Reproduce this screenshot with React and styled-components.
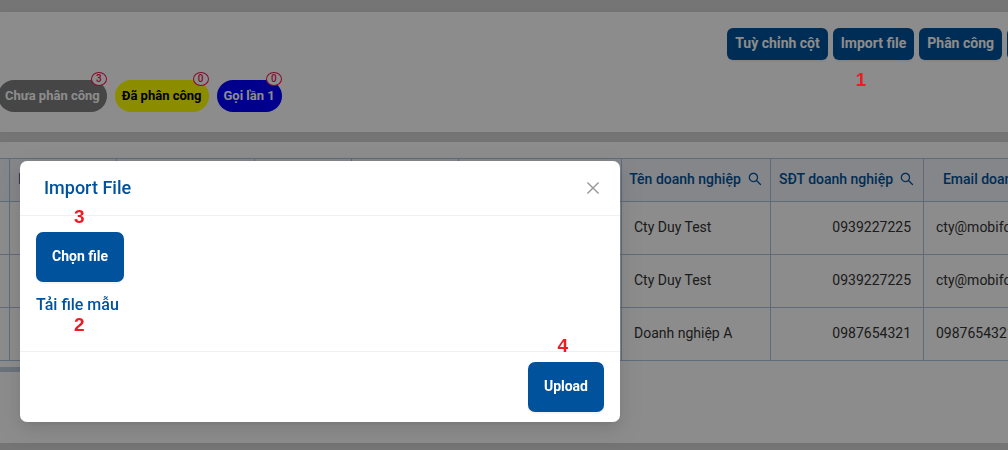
import React from 'react';
import styled, {createGlobalStyle} from 'styled-components';
import {AiOutlineClose, AiOutlineSearch} from 'react-icons/ai';

const GlobalStyle = createGlobalStyle`
  :root {
    --mainBlue: #00529c;
    --lineBlue: #a9c3e0;
    --markRed: #ed1c24;
  }
  *, *::before, *::after {
    box-sizing: border-box;
  }
  body {
    margin: 0;
    background: #d6d6d6;
    color: #333;
    font-family: Roboto, "Noto Sans", sans-serif;
    font-size: 14px;
    line-height: 22px;
  }
`;

const tags = [
  {label: 'Chưa phân công', count: 3, bg: '#808080', color: '#fff'},
  {label: 'Đã phân công', count: 0, bg: '#ffff00', color: '#000'},
  {label: 'Gọi lần 1', count: 0, bg: '#0000ff', color: '#fff'},
];

// width in px of every column, the table is wider than its card
const columns = [10, 107, 138, 97, 107, 163, 149, 153, 184];

const rows = [
  {name: 'Cty Duy Test', phone: '0939227225', email: 'cty@mobifone.vn'},
  {name: 'Cty Duy Test', phone: '0939227225', email: 'cty@mobifone.vn'},
  {name: 'Doanh nghiệp A', phone: '0987654321', email: '0987654321@gmail.com'},
];

function SearchHead({title}) {
  return (
    <HeadCell>
      <HeadInner>
        {title}
        <AiOutlineSearch size={16}/>
      </HeadInner>
    </HeadCell>
  );
}

function ActionCard() {
  return (
    <Card as="header">
      <Toolbar>
        <ToolButton type="button">Tuỳ chỉnh cột</ToolButton>
        <ToolButton type="button">Import file</ToolButton>
        <ToolButton type="button">Phân công</ToolButton>
        <ToolButton type="button" $wide aria-label="Export file"/>
      </Toolbar>
      <TagList>
        {tags.map(tag => (
          <Tag type="button" key={tag.label} $bg={tag.bg} $color={tag.color}>
            {tag.label}
            <Count>{tag.count}</Count>
          </Tag>
        ))}
      </TagList>
    </Card>
  );
}

function CompanyTable() {
  return (
    <TableCard>
      <TableScroll>
        <Table>
          <colgroup>
            {columns.map((width, i) => <col key={i} style={{width}}/>)}
          </colgroup>
          <thead>
            <tr>
              <HeadCell/>
              <HeadCell $left>ID</HeadCell>
              <HeadCell/>
              <HeadCell/>
              <HeadCell/>
              <HeadCell/>
              <SearchHead title="Tên doanh nghiệp"/>
              <SearchHead title="SĐT doanh nghiệp"/>
              <SearchHead title="Email doanh nghiệp"/>
            </tr>
          </thead>
          <tbody>
            {rows.map((row, i) => (
              <tr key={i}>
                <Cell/>
                <Cell/>
                <Cell/>
                <Cell/>
                <Cell/>
                <Cell/>
                <Cell>{row.name}</Cell>
                <Cell $right>{row.phone}</Cell>
                <Cell>{row.email}</Cell>
              </tr>
            ))}
          </tbody>
        </Table>
      </TableScroll>
      <ScrollThumb/>
    </TableCard>
  );
}

function ImportModal() {
  return (
    <Modal role="dialog" aria-labelledby="import-title">
      <ModalHeader>
        <ModalTitle id="import-title">Import File</ModalTitle>
        <CloseButton type="button" aria-label="Close">
          <AiOutlineClose size={18}/>
        </CloseButton>
      </ModalHeader>
      <ModalBody>
        <MainButton type="button">Chọn file</MainButton>
        <SampleLink href="#sample">Tải file mẫu</SampleLink>
        <Mark $top={-10} $left={54}>3</Mark>
        <Mark $top={98} $left={54}>2</Mark>
      </ModalBody>
      <ModalFooter>
        <MainButton type="button">Upload</MainButton>
        <Mark $top={-17} $right={52}>4</Mark>
      </ModalFooter>
    </Modal>
  );
}

export default function App() {
  return (
    <Page>
      <GlobalStyle/>
      <ActionCard/>
      <CompanyTable/>
      <Mask>
        <ImportModal/>
        <Mark $top={69} $right={142}>1</Mark>
      </Mask>
    </Page>
  );
}

const Page = styled.main`
  display: flex;
  flex-direction: column;
  gap: 10px;
  min-height: 100vh;
  padding: 12px 0 7px;
  overflow: hidden;
`;

const Card = styled.section`
  padding: 16px 0 20px;
  background: #fff;
  box-shadow: 0 0 8px rgba(0, 0, 0, 0.04);
`;

// the last button runs past the right edge of the window
const Toolbar = styled.div`
  display: flex;
  justify-content: flex-end;
  gap: 5px;
  margin-right: -80px;
`;

const ToolButton = styled.button`
  flex: none;
  width: ${props => props.$wide ? '81px' : 'auto'};
  height: 32px;
  padding: 0 8px 2px;
  border: 0;
  border-radius: 6px;
  background: var(--mainBlue);
  box-shadow: 0 2px 0 rgba(0, 0, 0, 0.04);
  color: #fff;
  font: 700 14px/22px Roboto, "Noto Sans", sans-serif;
`;

const TagList = styled.div`
  display: flex;
  gap: 8px;
  margin: 20px 0 0 -2px;
`;

const Tag = styled.button`
  position: relative;
  height: 32px;
  padding: 0 7px;
  border: 0;
  border-radius: 16px;
  background: ${props => props.$bg};
  color: ${props => props.$color};
  font: 700 13px/20px Roboto, "Noto Sans", sans-serif;
`;

const Count = styled.span`
  position: absolute;
  top: -8px;
  right: 0;
  width: 16px;
  height: 14px;
  border: 1px solid #f5104f;
  border-radius: 50%;
  background: #fff;
  color: #f5104f;
  font-size: 10px;
  font-weight: 500;
  line-height: 12px;
`;

const TableCard = styled(Card)`
  flex: 1;
  padding: 16px 0;
`;

const TableScroll = styled.div`
  overflow: hidden;
`;

const Table = styled.table`
  width: 1108px;
  min-width: 100%;
  table-layout: fixed;
  border-spacing: 0;
  border-top: 1px solid var(--lineBlue);
`;

const HeadCell = styled.th`
  height: 43px;
  padding: 0 8px 2px;
  border-right: 1px solid var(--lineBlue);
  border-bottom: 1px solid var(--lineBlue);
  background: #f0f4fa;
  color: var(--mainBlue);
  font-weight: 500;
  text-align: ${props => props.$left ? 'left' : 'center'};
  white-space: nowrap;
`;

const HeadInner = styled.span`
  display: flex;
  align-items: center;
  justify-content: center;
  gap: 6px;

  svg {
    flex: none;
  }
`;

const Cell = styled.td`
  height: 53px;
  padding: 0 12px 2px;
  border-right: 1px solid var(--lineBlue);
  border-bottom: 1px solid var(--lineBlue);
  text-align: ${props => props.$right ? 'right' : 'left'};
  white-space: nowrap;
`;

const ScrollThumb = styled.div`
  width: 40%;
  height: 5px;
  margin-top: 6px;
  background: #c1cfdf;
`;

const Mask = styled.div`
  position: fixed;
  inset: 0;
  display: flex;
  align-items: flex-start;
  padding: 161px 20px 0;
  background: rgba(0, 0, 0, 0.45);
`;

const Modal = styled.div`
  width: 100%;
  max-width: 600px;
  border-radius: 7px;
  background: #fff;
  box-shadow: 0 3px 6px -4px rgba(0, 0, 0, 0.12),
    0 6px 16px rgba(0, 0, 0, 0.08),
    0 9px 28px 8px rgba(0, 0, 0, 0.05);
`;

const ModalHeader = styled.div`
  display: flex;
  align-items: center;
  justify-content: space-between;
  height: 55px;
  padding: 0 16px 0 24px;
  border-bottom: 1px solid #f0f0f0;
`;

const ModalTitle = styled.h2`
  margin: 0;
  color: var(--mainBlue);
  font-size: 18px;
  font-weight: 500;
  line-height: 22px;
`;

const CloseButton = styled.button`
  display: flex;
  padding: 2px;
  border: 0;
  background: none;
  color: #999;
`;

const ModalBody = styled.div`
  position: relative;
  display: flex;
  flex-direction: column;
  align-items: flex-start;
  gap: 11px;
  height: 135px;
  padding: 16px;
`;

const ModalFooter = styled.div`
  position: relative;
  display: flex;
  justify-content: flex-end;
  padding: 10px 16px;
  border-top: 1px solid #f0f0f0;
`;

const MainButton = styled.button`
  height: 50px;
  padding: 0 16px 2px;
  border: 0;
  border-radius: 7px;
  background: var(--mainBlue);
  box-shadow: 0 2px 0 rgba(0, 0, 0, 0.04);
  color: #fff;
  font: 700 14px/22px Roboto, "Noto Sans", sans-serif;
`;

const SampleLink = styled.a`
  color: var(--mainBlue);
  font-size: 16px;
  font-weight: 500;
  line-height: 24px;
  text-decoration: none;
`;

// red step number laid over the screen
const Mark = styled.span`
  position: absolute;
  top: ${props => props.$top}px;
  left: ${props => props.$left === undefined ? 'auto' : `${props.$left}px`};
  right: ${props => props.$right === undefined ? 'auto' : `${props.$right}px`};
  color: var(--markRed);
  font: 700 19px/22px "Liberation Sans", sans-serif;
`;
